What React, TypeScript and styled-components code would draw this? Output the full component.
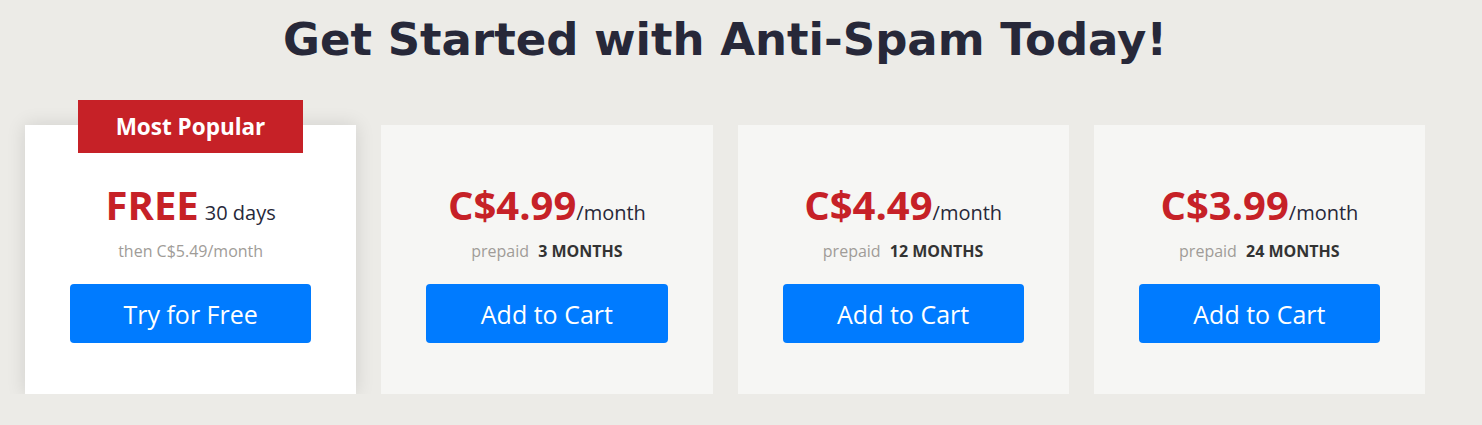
import React from 'react';
import styled, { createGlobalStyle } from 'styled-components';

type PlanType = {
  price: string;
  unit: string;
  note?: string;
  term?: string;
  cta: string;
  featured?: boolean;
};

const plans: PlanType[] = [
  { price: 'FREE', unit: '30 days', note: 'then C$5.49/month', cta: 'Try for Free', featured: true },
  { price: 'C$4.99', unit: '/month', term: '3 MONTHS', cta: 'Add to Cart' },
  { price: 'C$4.49', unit: '/month', term: '12 MONTHS', cta: 'Add to Cart' },
  { price: 'C$3.99', unit: '/month', term: '24 MONTHS', cta: 'Add to Cart' },
];

function App() {
  return (
    <>
      <GlobalStyle />
      <Section>
        <Title>Get Started with Anti-Spam Today!</Title>
        <CardGrid>
          {plans.map((plan) => (
            <Card key={plan.term || plan.price} featured={!!plan.featured}>
              {plan.featured && <Badge>Most Popular</Badge>}
              <PriceLine>
                <Price>{plan.price}</Price>
                <Unit spaced={!!plan.featured}>{plan.unit}</Unit>
              </PriceLine>
              {plan.note ? (
                <Note>{plan.note}</Note>
              ) : (
                <Note>
                  prepaid <Term>{plan.term}</Term>
                </Note>
              )}
              <CartButton type="button">{plan.cta}</CartButton>
            </Card>
          ))}
        </CardGrid>
      </Section>
    </>
  );
}

export default App;

const GlobalStyle = createGlobalStyle`
  body {
    margin: 0;
    background: #ecebe7;
    font-family: "Open Sans", "Liberation Sans", sans-serif;
  }
`;

const Section = styled.div`
  width: 1400px;
  margin-left: 25px;
  padding-top: 9px;
  display: flex;
  flex-direction: column;
  align-items: center;
`;

const Title = styled.h1`
  margin: 0;
  font-family: "DejaVu Sans", Inter, sans-serif;
  font-weight: 700;
  font-size: 45px;
  line-height: 62px;
  color: #272839;
`;

const CardGrid = styled.div`
  margin-top: 54px;
  width: 100%;
  display: grid;
  grid-template-columns: repeat(4, 1fr);
  gap: 25px;
`;

const Card = styled.div<{ featured: boolean }>`
  position: relative;
  height: 269px;
  box-sizing: border-box;
  padding: 55px 45px 0;
  display: flex;
  flex-direction: column;
  align-items: center;
  background: ${({ featured }) => (featured ? '#ffffff' : '#f6f6f4')};
  box-shadow: ${({ featured }) => (featured ? '0 0 18px rgba(0, 0, 0, 0.12)' : 'none')};
`;

const Badge = styled.div`
  position: absolute;
  top: -25px;
  left: 53px;
  width: 225px;
  height: 53px;
  background: #c62127;
  color: #fff;
  font-weight: 700;
  font-size: 22.5px;
  display: flex;
  align-items: center;
  justify-content: center;
`;

const PriceLine = styled.div`
  display: flex;
  align-items: baseline;
  line-height: 50px;
`;

const Price = styled.span`
  font-size: 40px;
  font-weight: 700;
  color: #c62127;
`;

const Unit = styled.span<{ spaced: boolean }>`
  font-size: 20px;
  color: #272839;
  margin-left: ${({ spaced }) => (spaced ? '6px' : '0')};
`;

const Note = styled.div`
  margin-top: 2px;
  font-size: 16px;
  line-height: 22px;
  color: #a09c98;
`;

const Term = styled.span`
  margin-left: 5px;
  font-weight: 700;
  color: #333;
`;

const CartButton = styled.button`
  margin-top: 22px;
  width: 100%;
  height: 59px;
  border: none;
  border-radius: 4px;
  background: #007bff;
  color: #fff;
  font-family: "Open Sans", sans-serif;
  font-size: 25px;
  cursor: pointer;
`;
